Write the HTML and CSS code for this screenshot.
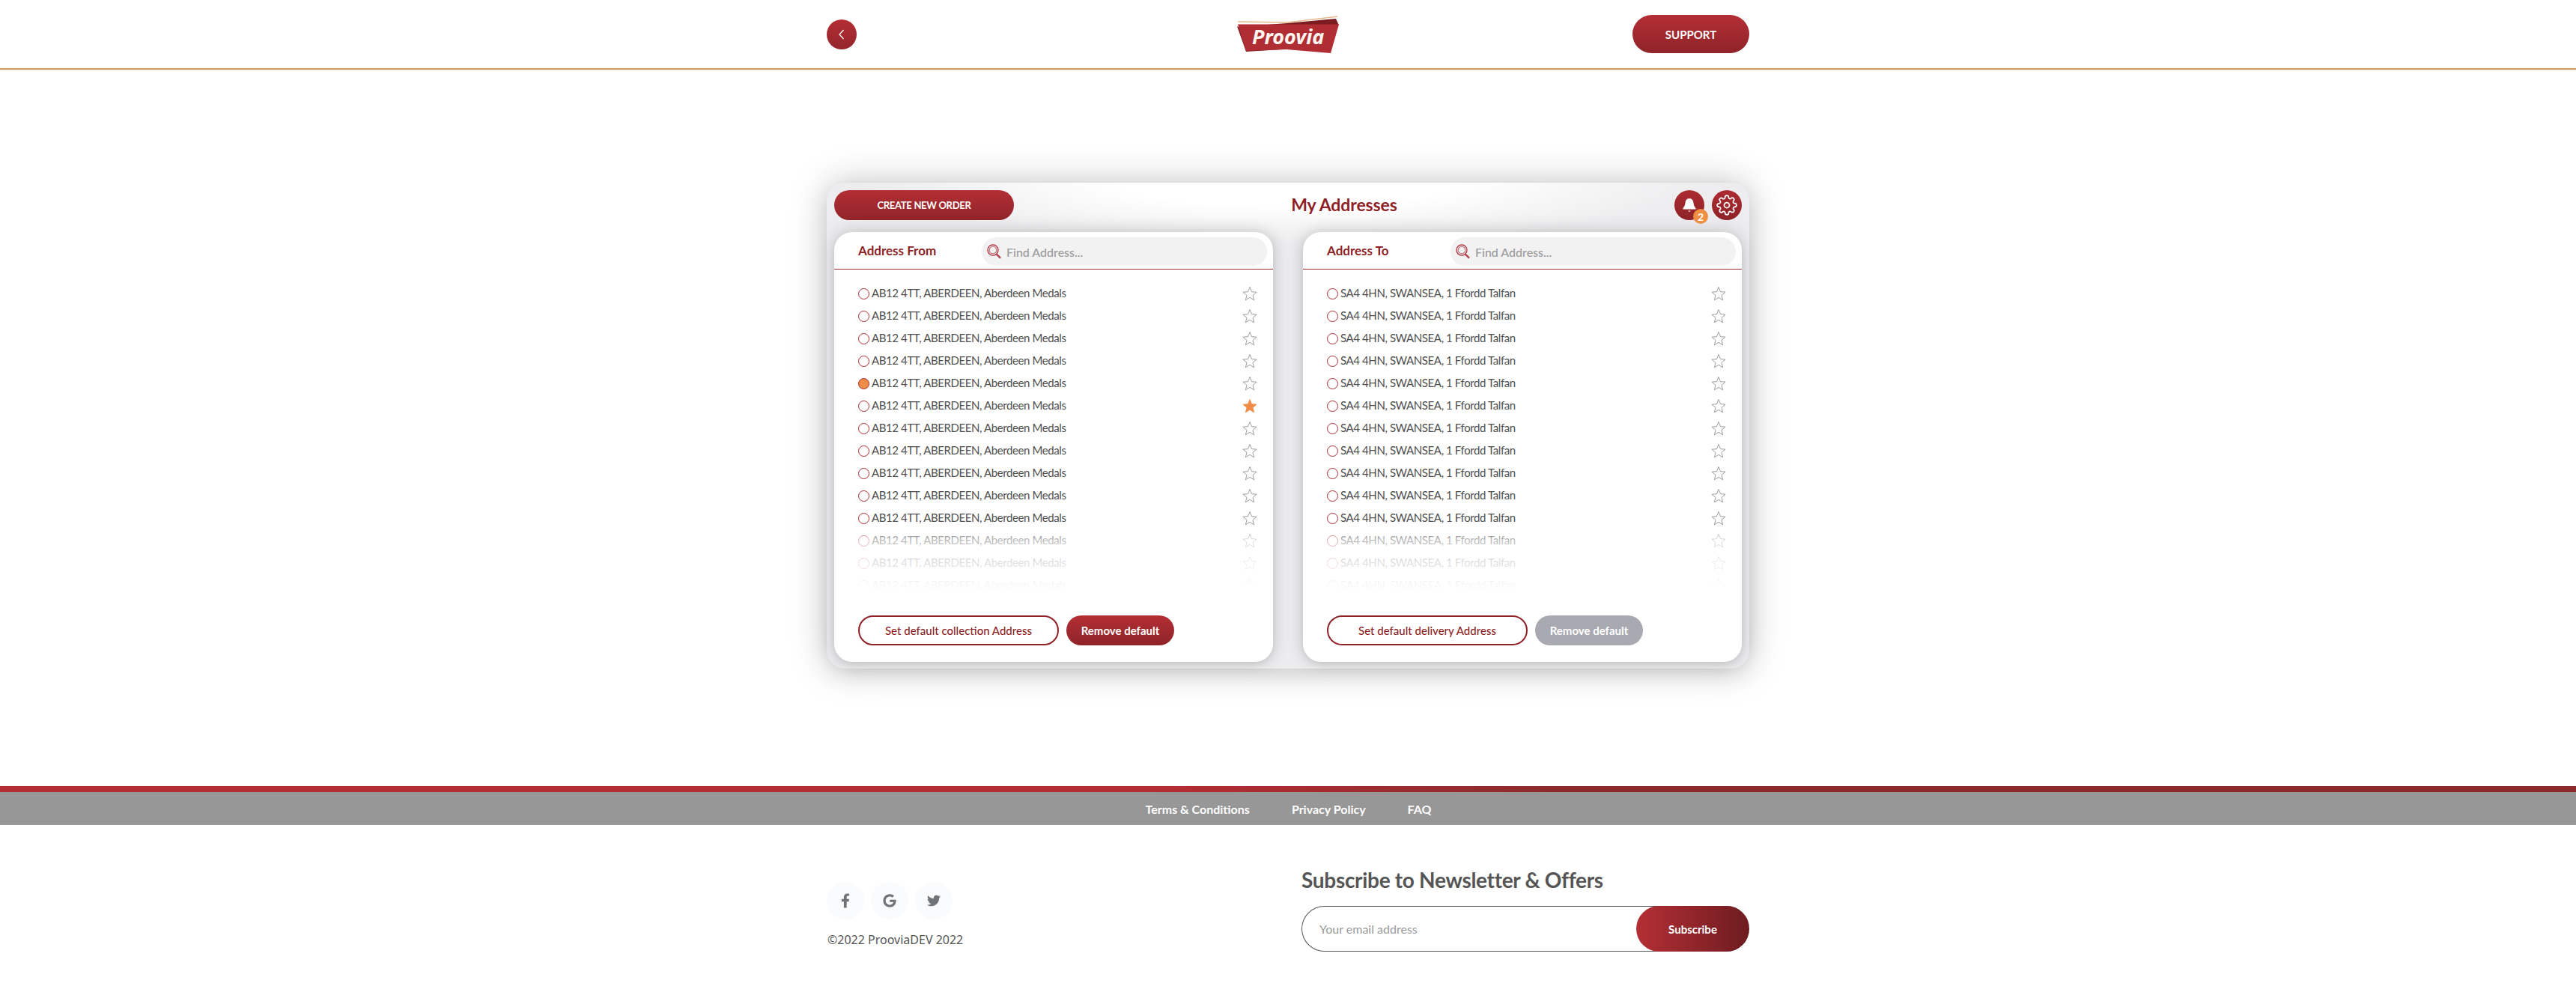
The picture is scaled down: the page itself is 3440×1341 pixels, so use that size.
FILE: index.html
```html
<!DOCTYPE html>
<html lang="en">
<head>
<meta charset="utf-8">
<title>My Addresses - Proovia</title>
<link rel="stylesheet" href="styles.css">
</head>
<body>
<svg class="defs" width="0" height="0" aria-hidden="true">
  <symbol id="star" viewBox="0 0 24 24"><path d="M12 1.800l3 7.400 7.900.6-6.100 5.100 2 7.700L12 18.400l-6.800 4.200 2-7.700-6.100-5.100L9 9.200z"/></symbol>
  <symbol id="search" viewBox="0 0 20 20"><circle cx="8" cy="8" r="7" fill="none" stroke="#b03a42" stroke-width="1.400"/><circle cx="8" cy="8" r="4.800" fill="none" stroke="#c4636a" stroke-width="1.100"/><path d="M12.800 13.500l5.200 5.200" stroke="#b03a42" stroke-width="2.400" fill="none"/></symbol>
</svg>
<header class="site-header">
  <div class="site-header-inner">
    <a class="back-btn"><svg viewBox="0 0 24 24" width="24" height="24"><path d="M14.500 6l-5.500 6 5.500 6" fill="none" stroke="#fff" stroke-width="1.300"/></svg></a>
    <svg class="logo" viewBox="0 0 137 52" width="137" height="52" role="img" aria-label="Proovia">
      <path d="M1 8L67 9L134 1" fill="none" stroke="#e9b98c" stroke-width="1.500"/>
      <path d="M40 12L67 10L132 4L136 13Z" fill="#7c1b20"/>
      <path d="M0 14L12 48L60 45Z" fill="#7c1b20"/>
      <path d="M1 11.500H136L125 50L66 45L12 47Z" fill="#b02d33"/>
      <text class="logo-text" x="20" y="38">Proovia</text>
    </svg>
    <a class="support-btn">SUPPORT</a>
  </div>
</header>

<main class="main">
  <section class="panel">
    <div class="panel-top">
      <a class="create-btn">CREATE NEW ORDER</a>
      <h1 class="panel-title">My Addresses</h1>
      <div class="panel-actions">
        <a class="icon-btn">
          <svg viewBox="0 0 24 24" width="24" height="24"><path d="M12 3c-3.600 0-5.200 3-5.500 6.300-.3 3-1.300 5-3 6.700v1.500h17V16c-1.700-1.700-2.700-3.700-3-6.700C17.200 6 15.600 3 12 3z" fill="#fff"/><path d="M10 19.500h4l-2 1.500z" fill="#fff"/></svg>
          <span class="badge">2</span>
        </a>
        <a class="icon-btn">
          <svg viewBox="0 0 24 24" width="28" height="28" fill="none" stroke="#fff" stroke-width="1.500"><circle cx="12" cy="12" r="3"/><path d="M19.400 15a1.650 1.650 0 0 0 .33 1.820l.06.06a2 2 0 0 1 0 2.830 2 2 0 0 1-2.830 0l-.06-.06a1.650 1.650 0 0 0-1.820-.33 1.650 1.650 0 0 0-1 1.510V21a2 2 0 0 1-2 2 2 2 0 0 1-2-2v-.09A1.650 1.650 0 0 0 9 19.400a1.650 1.650 0 0 0-1.820.33l-.06.06a2 2 0 0 1-2.830 0 2 2 0 0 1 0-2.830l.06-.06a1.650 1.650 0 0 0 .33-1.820 1.650 1.650 0 0 0-1.510-1H3a2 2 0 0 1-2-2 2 2 0 0 1 2-2h.09A1.650 1.650 0 0 0 4.600 9a1.650 1.650 0 0 0-.33-1.820l-.06-.06a2 2 0 0 1 0-2.830 2 2 0 0 1 2.830 0l.06.06a1.650 1.650 0 0 0 1.820.33H9a1.650 1.650 0 0 0 1-1.510V3a2 2 0 0 1 2-2 2 2 0 0 1 2 2v.09a1.650 1.650 0 0 0 1 1.510 1.650 1.650 0 0 0 1.820-.33l.06-.06a2 2 0 0 1 2.830 0 2 2 0 0 1 0 2.830l-.06.06a1.650 1.650 0 0 0-.33 1.820V9a1.650 1.650 0 0 0 1.510 1H21a2 2 0 0 1 2 2 2 2 0 0 1-2 2h-.09a1.650 1.650 0 0 0-1.510 1z"/></svg>
        </a>
      </div>
    </div>
    <div class="cards">
      <article class="card">
        <div class="card-head">
          <h2 class="card-title">Address From</h2>
          <div class="search"><svg class="search-icon"><use href="#search"/></svg><span class="search-text">Find Address...</span></div>
        </div>
        <ul class="list">
          <li class="row"><span class="radio"></span><span class="addr">AB12 4TT, ABERDEEN, Aberdeen Medals</span><svg class="star"><use href="#star"/></svg></li>
          <li class="row"><span class="radio"></span><span class="addr">AB12 4TT, ABERDEEN, Aberdeen Medals</span><svg class="star"><use href="#star"/></svg></li>
          <li class="row"><span class="radio"></span><span class="addr">AB12 4TT, ABERDEEN, Aberdeen Medals</span><svg class="star"><use href="#star"/></svg></li>
          <li class="row"><span class="radio"></span><span class="addr">AB12 4TT, ABERDEEN, Aberdeen Medals</span><svg class="star"><use href="#star"/></svg></li>
          <li class="row"><span class="radio radio-on"></span><span class="addr">AB12 4TT, ABERDEEN, Aberdeen Medals</span><svg class="star"><use href="#star"/></svg></li>
          <li class="row"><span class="radio"></span><span class="addr">AB12 4TT, ABERDEEN, Aberdeen Medals</span><svg class="star star-on"><use href="#star"/></svg></li>
          <li class="row"><span class="radio"></span><span class="addr">AB12 4TT, ABERDEEN, Aberdeen Medals</span><svg class="star"><use href="#star"/></svg></li>
          <li class="row"><span class="radio"></span><span class="addr">AB12 4TT, ABERDEEN, Aberdeen Medals</span><svg class="star"><use href="#star"/></svg></li>
          <li class="row"><span class="radio"></span><span class="addr">AB12 4TT, ABERDEEN, Aberdeen Medals</span><svg class="star"><use href="#star"/></svg></li>
          <li class="row"><span class="radio"></span><span class="addr">AB12 4TT, ABERDEEN, Aberdeen Medals</span><svg class="star"><use href="#star"/></svg></li>
          <li class="row"><span class="radio"></span><span class="addr">AB12 4TT, ABERDEEN, Aberdeen Medals</span><svg class="star"><use href="#star"/></svg></li>
          <li class="row"><span class="radio"></span><span class="addr">AB12 4TT, ABERDEEN, Aberdeen Medals</span><svg class="star"><use href="#star"/></svg></li>
          <li class="row"><span class="radio"></span><span class="addr">AB12 4TT, ABERDEEN, Aberdeen Medals</span><svg class="star"><use href="#star"/></svg></li>
          <li class="row"><span class="radio"></span><span class="addr">AB12 4TT, ABERDEEN, Aberdeen Medals</span><svg class="star"><use href="#star"/></svg></li>
        </ul>
        <div class="card-actions">
          <a class="btn-outline">Set default collection Address</a>
          <a class="btn-solid">Remove default</a>
        </div>
      </article>
      <article class="card">
        <div class="card-head">
          <h2 class="card-title">Address To</h2>
          <div class="search"><svg class="search-icon"><use href="#search"/></svg><span class="search-text">Find Address...</span></div>
        </div>
        <ul class="list">
          <li class="row"><span class="radio"></span><span class="addr">SA4 4HN, SWANSEA, 1 Ffordd Talfan</span><svg class="star"><use href="#star"/></svg></li>
          <li class="row"><span class="radio"></span><span class="addr">SA4 4HN, SWANSEA, 1 Ffordd Talfan</span><svg class="star"><use href="#star"/></svg></li>
          <li class="row"><span class="radio"></span><span class="addr">SA4 4HN, SWANSEA, 1 Ffordd Talfan</span><svg class="star"><use href="#star"/></svg></li>
          <li class="row"><span class="radio"></span><span class="addr">SA4 4HN, SWANSEA, 1 Ffordd Talfan</span><svg class="star"><use href="#star"/></svg></li>
          <li class="row"><span class="radio"></span><span class="addr">SA4 4HN, SWANSEA, 1 Ffordd Talfan</span><svg class="star"><use href="#star"/></svg></li>
          <li class="row"><span class="radio"></span><span class="addr">SA4 4HN, SWANSEA, 1 Ffordd Talfan</span><svg class="star"><use href="#star"/></svg></li>
          <li class="row"><span class="radio"></span><span class="addr">SA4 4HN, SWANSEA, 1 Ffordd Talfan</span><svg class="star"><use href="#star"/></svg></li>
          <li class="row"><span class="radio"></span><span class="addr">SA4 4HN, SWANSEA, 1 Ffordd Talfan</span><svg class="star"><use href="#star"/></svg></li>
          <li class="row"><span class="radio"></span><span class="addr">SA4 4HN, SWANSEA, 1 Ffordd Talfan</span><svg class="star"><use href="#star"/></svg></li>
          <li class="row"><span class="radio"></span><span class="addr">SA4 4HN, SWANSEA, 1 Ffordd Talfan</span><svg class="star"><use href="#star"/></svg></li>
          <li class="row"><span class="radio"></span><span class="addr">SA4 4HN, SWANSEA, 1 Ffordd Talfan</span><svg class="star"><use href="#star"/></svg></li>
          <li class="row"><span class="radio"></span><span class="addr">SA4 4HN, SWANSEA, 1 Ffordd Talfan</span><svg class="star"><use href="#star"/></svg></li>
          <li class="row"><span class="radio"></span><span class="addr">SA4 4HN, SWANSEA, 1 Ffordd Talfan</span><svg class="star"><use href="#star"/></svg></li>
          <li class="row"><span class="radio"></span><span class="addr">SA4 4HN, SWANSEA, 1 Ffordd Talfan</span><svg class="star"><use href="#star"/></svg></li>
        </ul>
        <div class="card-actions">
          <a class="btn-outline">Set default delivery Address</a>
          <a class="btn-solid btn-disabled">Remove default</a>
        </div>
      </article>
    </div>
  </section>
</main>

<footer class="footer">
  <div class="footer-stripe"></div>
  <nav class="footer-nav">
    <a class="footer-link">Terms &amp; Conditions</a>
    <a class="footer-link">Privacy Policy</a>
    <a class="footer-link">FAQ</a>
  </nav>
  <div class="footer-body">
    <div class="footer-left">
      <div class="socials">
        <a class="social"><svg class="social-f" viewBox="0 0 320 512"><path d="M279.14 288l14.22-92.66h-88.91v-60.13c0-25.35 12.42-50.06 52.24-50.06h40.42V6.26S260.43 0 225.36 0c-73.22 0-121.08 44.38-121.08 124.72v70.62H22.89V288h81.39v224h100.17V288z"/></svg></a>
        <a class="social"><svg class="social-g" viewBox="0 0 488 512"><path d="M488 261.8C488 403.3 391.1 504 248 504 110.8 504 0 393.2 0 256S110.8 8 248 8c66.8 0 123 24.5 166.3 64.9l-67.5 64.9C258.5 52.6 94.3 116.6 94.3 256c0 86.5 69.1 156.6 153.7 156.6 98.2 0 135-70.4 140.8-106.9H248v-85.3h236.1c2.3 12.7 3.9 24.9 3.9 41.4z"/></svg></a>
        <a class="social"><svg class="social-t" viewBox="0 0 512 512"><path d="M459.37 151.716c.325 4.548.325 9.097.325 13.645 0 138.72-105.583 298.558-298.558 298.558-59.452 0-114.68-17.219-161.137-47.106 8.447.974 16.568 1.299 25.34 1.299 49.055 0 94.213-16.568 130.274-44.832-46.132-.975-84.792-31.188-98.112-72.772 6.498.974 12.995 1.624 19.818 1.624 9.421 0 18.843-1.3 27.614-3.573-48.081-9.747-84.143-51.98-84.143-102.985v-1.299c13.969 7.797 30.214 12.67 47.431 13.319-28.264-18.843-46.781-51.005-46.781-87.391 0-19.492 5.197-37.36 14.294-52.954 51.655 63.675 129.3 105.258 216.365 109.807-1.624-7.797-2.599-15.918-2.599-24.04 0-57.828 46.782-104.934 104.934-104.934 30.213 0 57.502 12.67 76.67 33.137 23.715-4.548 46.456-13.645 66.599-25.34-7.798 24.366-24.366 44.833-46.132 57.827 21.117-2.273 41.584-8.122 60.426-16.243-14.292 20.791-32.161 39.308-52.628 54.253z"/></svg></a>
      </div>
      <p class="copyright">©2022 ProoviaDEV 2022</p>
    </div>
    <div class="footer-right">
      <h3 class="subscribe-title">Subscribe to Newsletter &amp; Offers</h3>
      <div class="subscribe">
        <span class="subscribe-input">Your email address</span>
        <a class="subscribe-btn">Subscribe</a>
      </div>
    </div>
  </div>
</footer>
</body>
</html>
```

FILE: styles.css
```css
* { box-sizing: border-box; }
html, body { margin: 0; padding: 0; background: #fff; }
body { font-family: "Lato", "Open Sans", sans-serif; color: #555; width: 3440px; height: 1341px; overflow: hidden; }
.defs { position: absolute; }
h1, h2, h3, p, ul { margin: 0; padding: 0; }
ul { list-style: none; }

.site-header { height: 93px; border-bottom: 2px solid #cd9c66; box-shadow: 0 1px 1px #f8e9d8; padding-top: 20px; }
.site-header-inner { width: 1232px; margin: 0 auto; display: grid; grid-template-columns: 1fr auto 1fr; grid-template-rows: 51px; align-items: center; }
.back-btn { width: 40px; height: 40px; border-radius: 50%; background: linear-gradient(180deg, #b32e34, #93262b); display: flex; align-items: center; justify-content: center; }
.logo { display: block; align-self: start; margin-top: 1px; }
.logo-text { font-family: "Noto Sans", sans-serif; font-weight: 700; font-style: italic; font-size: 27px; fill: #fdf5f0; }
.support-btn { justify-self: end; width: 156px; height: 51px; border-radius: 26px; background: linear-gradient(180deg, #b32e34, #8f2429); color: #fff; font: 700 15px "Lato", sans-serif; display: flex; align-items: center; justify-content: center; }

.main { height: 957px; padding-top: 151px; }
.panel { width: 1232px; height: 649px; margin: 0 auto; padding: 10px 10px 9px; border-radius: 24px; background: radial-gradient(ellipse 560px 80px at 50% 0, #fff 40%, rgba(255,255,255,0) 100%), #ededef; box-shadow: 0 0 50px rgba(0,0,0,.22), 0 8px 30px rgba(0,0,0,.08); }
.panel-top { height: 40px; margin-bottom: 16px; display: flex; justify-content: space-between; align-items: center; }
.create-btn { width: 240px; height: 40px; border-radius: 20px; background: linear-gradient(180deg, #b32e34, #90252a); color: #fff; font-weight: 700; font-size: 13px; letter-spacing: -.3px; display: flex; align-items: center; justify-content: center; }
.panel-title { font-size: 23px; font-weight: 700; letter-spacing: -.1px; color: #8e1f26; line-height: 38px; margin-top: -2px; }
.panel-actions { display: flex; gap: 10px; }
.icon-btn { position: relative; width: 40px; height: 40px; border-radius: 50%; background: linear-gradient(180deg, #ad2b31, #8e2328); display: flex; align-items: center; justify-content: center; }
.badge { position: absolute; left: 25px; top: 25px; width: 20px; height: 20px; border-radius: 50%; background: #ee9044; color: #fff; font-size: 14px; font-weight: 700; display: flex; align-items: center; justify-content: center; }

.cards { display: flex; gap: 40px; }
.card { width: 586px; height: 574px; background: #fff; border-radius: 24px; box-shadow: 0 0 22px rgba(0,0,0,.2), 0 4px 10px rgba(0,0,0,.06); }
.card-head { height: 50px; border-bottom: 1px solid #a02a32; display: flex; align-items: center; padding-left: 32px; }
.card-title { width: 165px; font-size: 17px; font-weight: 700; color: #8e1f26; line-height: 24px; }
.search { width: 381px; height: 38px; margin-top: 3px; border-radius: 19px; background: #f2f2f3; display: flex; align-items: center; padding-left: 7px; gap: 6px; }
.search-icon { width: 20px; height: 20px; }
.search-text { font-size: 16px; font-weight: 500; color: #9a9a9a; }

.list { position: relative; height: 426px; padding-top: 16px; overflow: hidden; }
.list::after { content: ""; position: absolute; left: 0; right: 0; bottom: 0; height: 86px; background: linear-gradient(180deg, rgba(255,255,255,0) 0, rgba(255,255,255,.62) 25%, rgba(255,255,255,.82) 60%, rgba(255,255,255,.98) 100%); }
.row { height: 30px; display: flex; align-items: center; padding: 0 21px 0 32px; }
.radio { width: 15px; height: 15px; margin-top: 2px; border: 1.5px solid #a82a33; border-radius: 50%; flex: none; margin-right: 3px; }
.radio-on { background: #ef8d48; }
.addr { flex: 1; font-size: 15px; letter-spacing: -.4px; color: #4f4f4f; line-height: 20px; }
.star { width: 20px; height: 20px; margin-top: 2px; fill: #fff; stroke: #8a8a8a; stroke-width: 1; flex: none; }
.star-on { fill: #ef8d48; stroke: #ef8d48; }

.card-actions { display: flex; gap: 10px; padding: 36px 0 0 32px; }
.btn-outline { width: 268px; height: 40px; border: 2px solid #8f2229; border-radius: 20px; color: #8e1f26; font-size: 15px; font-weight: 500; display: flex; align-items: center; justify-content: center; }
.btn-solid { width: 144px; height: 40px; border-radius: 20px; background: linear-gradient(180deg, #b32e34, #8e2429); color: #fff; font-size: 15px; font-weight: 700; display: flex; align-items: center; justify-content: center; }
.btn-disabled { background: #a9a9b1; }

.footer-stripe { height: 8px; background: linear-gradient(90deg, #b32d33 0, #b32d33 45%, #8e2a2e 60%, #8e2a2e 100%); }
.footer-nav { height: 44px; background: #979797; display: flex; justify-content: center; align-items: center; gap: 56px; padding-left: 1px; }
.footer-link { color: #fff; font: 700 16px "Lato", sans-serif; }
.footer-body { width: 1232px; margin: 0 auto; display: flex; justify-content: space-between; }
.footer-left { padding-top: 76px; }
.socials { display: flex; gap: 9px; }
.social { width: 50px; height: 50px; border-radius: 50%; background: #f9fbfd; display: flex; align-items: center; justify-content: center; fill: #6f7479; }
.social-f { width: 12px; height: 20px; }
.social-g { width: 18px; height: 18px; }
.social-t { width: 18px; height: 18px; }
.copyright { font: 400 16px/20px "Noto Sans", sans-serif; color: #555; margin-top: 17px; padding-left: 1px; }
.footer-right { width: 598px; padding-top: 52px; }
.subscribe-title { font: 700 28px/42px "Lato", sans-serif; letter-spacing: -.3px; color: #555; }
.subscribe { height: 61px; margin-top: 14px; border: 1px solid #555; border-right: 0; border-radius: 31px; display: flex; justify-content: space-between; align-items: center; padding-left: 23px; }
.subscribe-input { font: 400 16px "Lato", sans-serif; color: #9a9a9a; }
.subscribe-btn { width: 151px; height: 61px; border-radius: 31px; background: linear-gradient(90deg, #b32f35, #6e1c20); color: #fff; font: 700 15px "Lato", sans-serif; display: flex; align-items: center; justify-content: center; }
```
